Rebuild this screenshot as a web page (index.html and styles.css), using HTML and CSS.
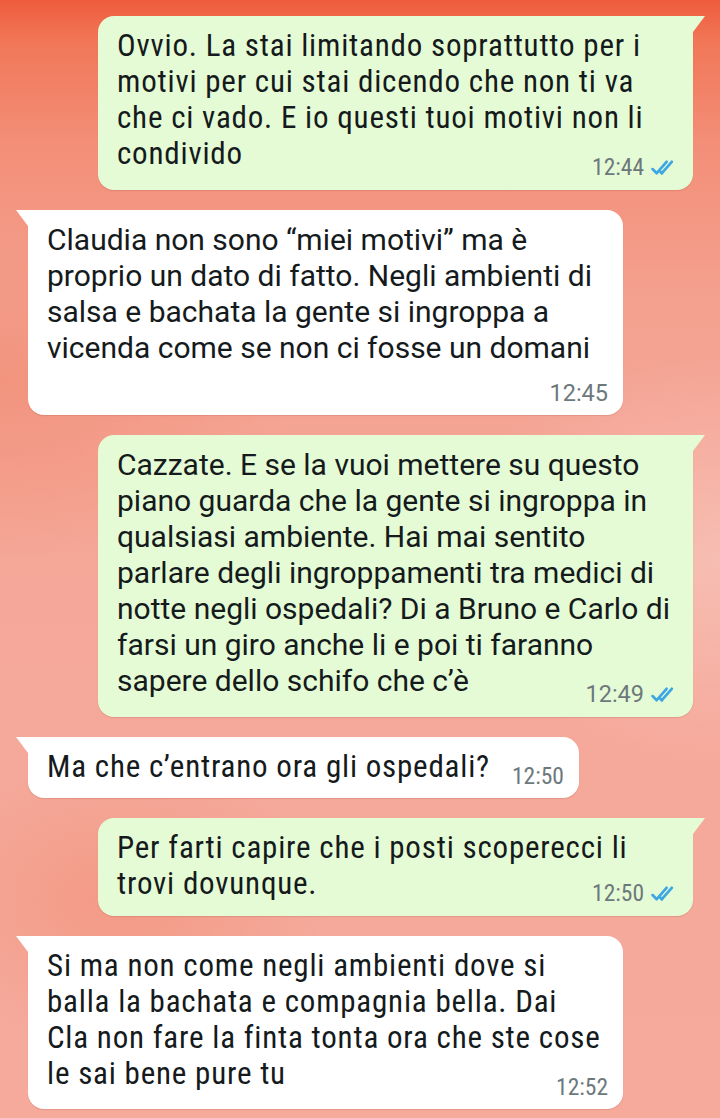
FILE: index.html
```html
<!DOCTYPE html>
<html lang="it">

<head>
	<meta charset="UTF-8">
	<meta name="viewport" content="width=device-width, initial-scale=1.0">
	<title>Chat</title>
	<link rel="stylesheet" href="styles.css">
</head>

<body>
	<div class="chat">
		<div class="msg msg--out msg--narrow">
			<p class="msg__text">Ovvio. La stai limitando soprattutto per i<br>motivi per cui stai dicendo che non ti va<br>che ci vado. E io questi tuoi motivi non li<br>condivido<span class="msg__meta">12:44<svg class="ticks" viewBox="0 0 26 16"><path d="M1.5 9.5l4 4L15 2.5M10.5 13.5L20 2.5"/><path d="M8.6 11.6l1.9 1.9"/></svg></span></p>
		</div>
		<div class="msg msg--in">
			<p class="msg__text">Claudia non sono “miei motivi” ma è<br>proprio un dato di fatto. Negli ambienti di<br>salsa e bachata la gente si ingroppa a<br>vicenda come se non ci fosse un domani<br><span class="msg__meta msg__meta--raised">12:45</span></p>
		</div>
		<div class="msg msg--out">
			<p class="msg__text">Cazzate. E se la vuoi mettere su questo<br>piano guarda che la gente si ingroppa in<br>qualsiasi ambiente. Hai mai sentito<br>parlare degli ingroppamenti tra medici di<br>notte negli ospedali? Di a Bruno e Carlo di<br>farsi un giro anche li e poi ti faranno<br>sapere dello schifo che c’è<span class="msg__meta">12:49<svg class="ticks" viewBox="0 0 26 16"><path d="M1.5 9.5l4 4L15 2.5M10.5 13.5L20 2.5"/><path d="M8.6 11.6l1.9 1.9"/></svg></span></p>
		</div>
		<div class="msg msg--in msg--narrow msg--short">
			<p class="msg__text">Ma che c’entrano ora gli ospedali?<span class="msg__meta msg__meta--raised">12:50</span></p>
		</div>
		<div class="msg msg--out msg--narrow">
			<p class="msg__text">Per farti capire che i posti scoperecci li<br>trovi dovunque.<span class="msg__meta msg__meta--raised">12:50<svg class="ticks" viewBox="0 0 26 16"><path d="M1.5 9.5l4 4L15 2.5M10.5 13.5L20 2.5"/><path d="M8.6 11.6l1.9 1.9"/></svg></span></p>
		</div>
		<div class="msg msg--in msg--narrow">
			<p class="msg__text">Si ma non come negli ambienti dove si<br>balla la bachata e compagnia bella. Dai<br>Cla non fare la finta tonta ora che ste cose<br>le sai bene pure tu<span class="msg__meta">12:52</span></p>
		</div>
	</div>
</body>

</html>
```
FILE: styles.css
```css
*,
*::before,
*::after {
	box-sizing: border-box;
}

html,
body {
	height: 100%;
}

body {
	margin: 0;
	overflow: hidden;
	font-family: Roboto, "Noto Sans", sans-serif;
	color: #151a1c;
	background-color: #f4a797;
	background-image:
		radial-gradient(ellipse 420px 260px at 0 380px, #f2947e 0%, transparent 70%),
		radial-gradient(ellipse 380px 300px at 720px 560px, #f7bdb2 0%, transparent 70%),
		radial-gradient(ellipse 300px 200px at 120px 900px, #f39a86 0%, transparent 70%),
		linear-gradient(180deg, #ee5c3c 0px, #f17657 40px, #f38e77 140px, #f4a190 300px, #f5a899 600px, #f5aa9c 1118px);
}

.chat {
	display: flex;
	flex-direction: column;
	gap: 20px;
	padding-top: 16px;
}

.msg {
	position: relative;
	display: flow-root;
	width: 595px;
	padding: 12px 8px 10px 19px;
	box-shadow: 0 1px 1px rgba(120, 40, 30, 0.15);
}

.msg--short {
	width: auto;
}

.msg::before {
	content: '';
	position: absolute;
	top: 0;
	width: 0;
	height: 0;
	border-top: 16px solid;
}

.msg--in {
	align-self: flex-start;
	margin-left: 28px;
	background-color: #ffffff;
	border-radius: 0 16px 16px 16px;
}

.msg--in::before {
	left: -12px;
	color: #ffffff;
	border-left: 12px solid transparent;
}

.msg--out {
	align-self: flex-end;
	margin-right: 27px;
	background-color: #e5fbd5;
	border-radius: 16px 0 16px 16px;
}

.msg--out::before {
	right: -12px;
	color: #e5fbd5;
	border-right: 12px solid transparent;
}

.msg__text {
	margin: 0;
	font-size: 30px;
	line-height: 36px;
}

.msg--narrow .msg__text {
	font-family: "Roboto Condensed", Roboto, sans-serif;
	font-size: 31px;
	letter-spacing: 0.8px;
}

.msg__meta {
	float: right;
	display: flex;
	align-items: center;
	gap: 7px;
	margin: 20px 7px 0 22px;
	font-family: Roboto, sans-serif;
	font-size: 23.5px;
	line-height: 23.5px;
	letter-spacing: 0;
	color: #6d787d;
}

.msg__meta--raised {
	margin-top: 16px;
}

.msg--narrow .msg__meta {
	font-family: "Roboto Condensed", Roboto, sans-serif;
}

.ticks {
	width: 27px;
	height: 17px;
	fill: none;
	stroke: #3ea7e3;
	stroke-width: 2.6;
	stroke-linecap: round;
	stroke-linejoin: round;
}
```
